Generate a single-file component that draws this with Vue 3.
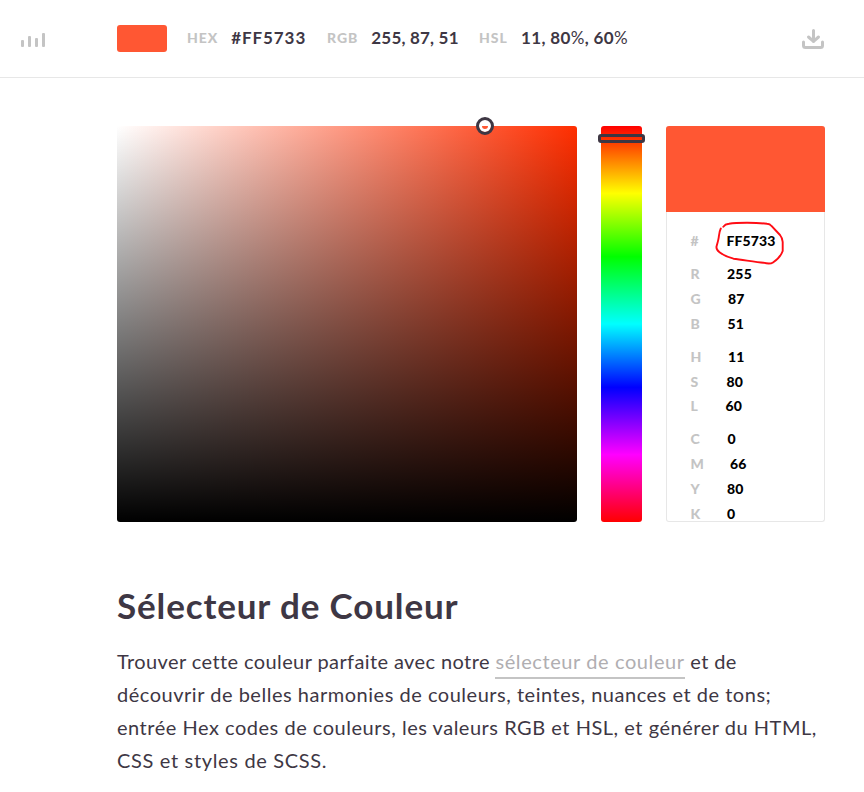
<script setup>
const summary = [
  { key: 'hex', label: 'HEX', parts: ['#FF5733'] },
  { key: 'rgb', label: 'RGB', parts: ['255, 87, 51'] },
  { key: 'hsl', label: 'HSL', parts: ['11, 80', '%', ', 60', '%'] },
]
const groups = [
  [{ k: '#', v: 'FF5733', w: 36 }],
  [{ k: 'R', v: '255', w: 36.5 }, { k: 'G', v: '87', w: 37.5 }, { k: 'B', v: '51', w: 37 }],
  [{ k: 'H', v: '11', w: 37.5 }, { k: 'S', v: '80', w: 36 }, { k: 'L', v: '60', w: 35 }],
  [{ k: 'C', v: '0', w: 37 }, { k: 'M', v: '66', w: 39.5 }, { k: 'Y', v: '80', w: 36.5 }, { k: 'K', v: '0', w: 36.5 }],
]
</script>

<template>
  <div class="page">
    <header class="bar">
      <svg class="logo" width="26" height="16" viewBox="0 0 26 16">
        <rect x="1" y="7" width="3" height="7" rx="1" />
        <rect x="8" y="3" width="3" height="11" rx="1" />
        <rect x="15" y="5" width="3" height="9" rx="1" />
        <rect x="22" y="0" width="3" height="14" rx="1" />
      </svg>
      <div class="swatch"></div>
      <div v-for="s in summary" :key="s.key" class="item" :class="s.key">
        <span class="label">{{ s.label }}</span>
        <span class="value"><span v-for="(p, i) in s.parts" :key="i" :class="{ pct: p === '%' }">{{ p }}</span></span>
      </div>
      <svg class="download" width="24" height="22" viewBox="0 0 24 22">
        <path d="M2.500 14v3.500q0 2 2 2h15q2 0 2-2V14" />
        <path class="arrow" d="M12.500 2.500v11M7.500 9l5 4.300l5-4.300" />
      </svg>
    </header>

    <main>
      <section class="picker">
        <div class="field"><div class="knob"></div></div>
        <div class="hue"><div class="slider"></div></div>
        <div class="panel">
          <div class="preview"></div>
          <div class="values">
            <div v-for="(g, i) in groups" :key="i" class="group">
              <div v-for="r in g" :key="r.k" class="row">
                <span class="rk" :style="{ width: r.w + 'px' }">{{ r.k }}</span>
                <span class="rv">{{ r.v }}</span>
              </div>
            </div>
          </div>
          <svg class="mark" width="72" height="46" viewBox="714 220 72 46">
            <path d="M723.300 226.700Q725 224.300 729 223.800C737 222.400 757 222.500 767 223.800Q770 224 771.500 226L780 235Q782.500 238 782.700 242V251Q780 258 773 262.500Q770 264.500 763.300 262.700C757 262.300 744 260 733.500 258.700Q725 256.500 719.500 252.200Q716 249.700 716.500 246.500C717.500 243 718.700 239 718.900 236Q719.500 231 720.800 228.500" />
          </svg>
        </div>
      </section>

      <article>
        <h1>Sélecteur de Couleur</h1>
        <p>
          <span class="line l1">Trouver cette couleur parfaite avec notre <a>sélecteur de couleur</a> et de</span>
          <span class="line l2">découvrir de belles harmonies de couleurs, teintes, nuances et de tons;</span>
          <span class="line l3">entrée Hex codes de couleurs, les valeurs RGB et HSL, et générer du HTML,</span>
          <span class="line l4">CSS et styles de SCSS.</span>
        </p>
      </article>
    </main>
  </div>
</template>

<style>
body { background: #fff; }
</style>

<style scoped>
.page {
  box-sizing: border-box;
  width: 864px;
  height: 792px;
  overflow: hidden;
  background: #fff;
  color: #3e3744;
  font-family: Lato, "Open Sans", sans-serif;
}
.bar {
  box-sizing: border-box;
  height: 78px;
  border-bottom: 1px solid #e7e7e7;
  display: flex;
  align-items: center;
  padding: 0 39px 0 20px;
}
.logo { margin-right: 71px; margin-top: 5px; fill: #c4c4c4; }
.swatch { width: 50px; height: 27px; border-radius: 3px; background: #ff5733; margin-right: 20px; }
.item { display: flex; align-items: center; white-space: nowrap; font-weight: 700; padding-bottom: 2px; }
.label { color: #c4c4c4; font-size: 14px; font-weight: 900; letter-spacing: 1px; }
.value { font-size: 17px; letter-spacing: 0.200px; }
.hex .value { letter-spacing: 0.900px; }
.hsl .value { letter-spacing: 0.350px; }
.pct { font-weight: 400; }
.hex { width: 140px; }
.rgb { width: 152px; }
.hex .label, .rgb .label { width: 44.300px; }
.hsl .label { width: 42px; }
.download { margin-left: auto; fill: none; stroke: #c4c4c4; stroke-width: 3; stroke-linecap: round; stroke-linejoin: round; }

main { padding: 48px 39px 0 117px; }
.picker { display: flex; gap: 24px; height: 396px; }
.field {
  position: relative;
  width: 460px;
  border-radius: 3px;
  background: linear-gradient(to top, #000, transparent), linear-gradient(to right, #fff, #ff2e00);
}
.knob {
  position: absolute;
  box-sizing: border-box;
  left: 359px;
  top: -9px;
  width: 18px;
  height: 18px;
  border: 3px solid #3e3744;
  border-radius: 50%;
  box-shadow: inset 0 0 0 3px #fff;
}
.hue {
  position: relative;
  width: 41px;
  border-radius: 3px;
  background: linear-gradient(to bottom, #f00, #ff0 17%, #0f0 33%, #0ff 50%, #00f 66%, #f0f 83%, #f00);
}
.slider {
  position: absolute;
  box-sizing: border-box;
  left: -3px;
  top: 8px;
  width: 47px;
  height: 9px;
  border: 3px solid #3e3744;
  border-radius: 3px;
}
.panel {
  position: relative;
  box-sizing: border-box;
  width: 159px;
  border: 1px solid #e7e7e7;
  border-top: 0;
  border-radius: 3px;
}
.preview { height: 86px; margin: 0 -1px; border-radius: 3px 3px 0 0; background: #ff5733; }
.values { display: flex; flex-direction: column; gap: 8.200px; padding: 17.200px 0 0 23.500px; }
.row { display: flex; height: 24.800px; line-height: 24.800px; font-size: 14px; }
.rk { color: #c4c4c4; font-weight: 900; }
.rv { color: #000; font-weight: 900; letter-spacing: 0.250px; }
.row:first-child:last-child .rv { letter-spacing: 0.100px; }
.mark { position: absolute; left: 47px; top: 94px; fill: none; stroke: #ff0c14; stroke-width: 1.900; stroke-linecap: round; }

h1 { margin: 61px 0 0; font-size: 35px; line-height: 44px; font-weight: 700; letter-spacing: 0.870px; white-space: nowrap; }
p { margin: 18px 0 0; font-size: 20px; line-height: 33px; }
.line { display: block; white-space: nowrap; letter-spacing: 0.520px; }
.l1 { letter-spacing: 0.400px; }
.l4 { letter-spacing: 0.660px; }
a { color: #b0aeb1; border-bottom: 2px solid #c4c4c4; padding-bottom: 4px; letter-spacing: 0.600px; }
</style>
